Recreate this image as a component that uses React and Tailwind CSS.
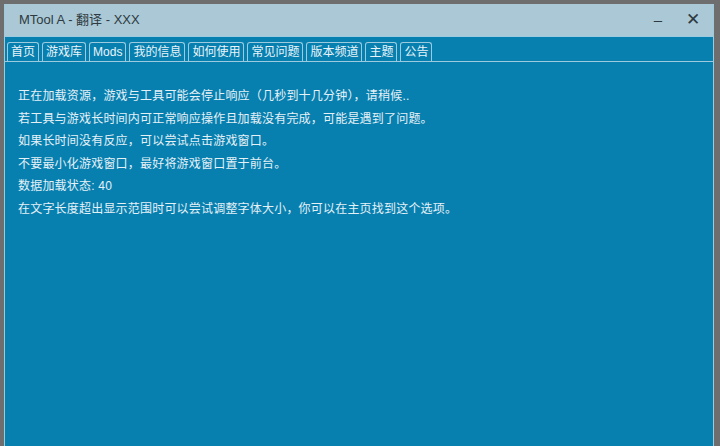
const TABS = ['首页', '游戏库', 'Mods', '我的信息', '如何使用', '常见问题', '版本频道', '主题', '公告'];

const LINES = [
  '正在加载资源，游戏与工具可能会停止响应（几秒到十几分钟），请稍候..',
  '若工具与游戏长时间内可正常响应操作且加载没有完成，可能是遇到了问题。',
  '如果长时间没有反应，可以尝试点击游戏窗口。',
  '不要最小化游戏窗口，最好将游戏窗口置于前台。',
  '数据加载状态: 40',
  '在文字长度超出显示范围时可以尝试调整字体大小，你可以在主页找到这个选项。',
];

const FONT = { fontFamily: '"Liberation Sans", "Noto Sans CJK SC", sans-serif' };

export default function App() {
  return (
    <div className="h-[446px] w-[720px] overflow-hidden bg-[#6e6e6e] pt-[4px] pl-[4px] pr-[6px]" style={FONT}>
      <div className="flex h-full flex-col border-l border-r border-[#9ccbe0] bg-[#0780b0]">
        <div className="flex h-[32px] items-center bg-[#aac8d6] pl-[14px] pr-[8px] text-[13px] text-[#2e3a40]">
          <span className="flex-1">MTool A - 翻译 - XXX</span>
          <span className="w-[30px] text-center text-[15px] text-[#2e3a40]">–</span>
          <span className="ml-[8px] w-[24px] text-center text-[17px] text-[#2e3a40]">✕</span>
        </div>
        <div className="flex h-[26px] items-end gap-[3px] border-t border-b border-[#9ccbe0] bg-[#0780b0] pl-[2px]">
          {TABS.map((t) => (
            <div
              key={t}
              className="flex h-[19px] items-center rounded-t-[3px] border border-b-0 border-[#9ccbe0] px-[3px] text-[12px] leading-none text-[#eaf4f8]"
            >
              {t}
            </div>
          ))}
        </div>
        <div className="flex flex-1 flex-col pl-[13px] pt-[23px] text-[12px] leading-[22.5px] tracking-[0.2px] text-[#e6f1f6]">
          {LINES.map((l) => (
            <div key={l}>{l}</div>
          ))}
        </div>
      </div>
    </div>
  );
}
